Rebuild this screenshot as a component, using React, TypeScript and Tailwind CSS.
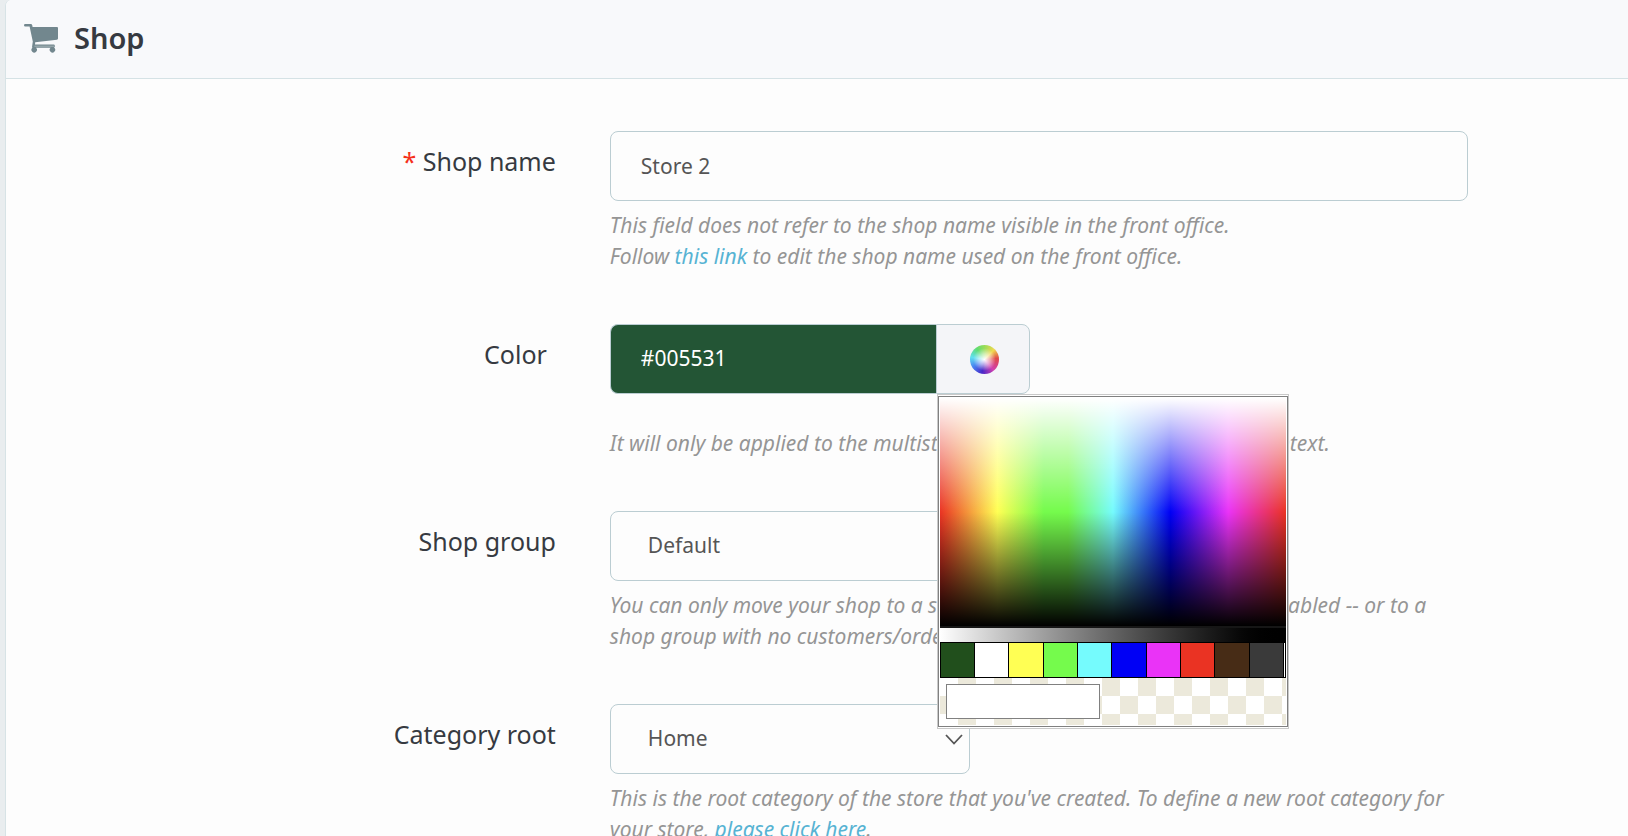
import type { ReactNode } from "react";
import { useState } from "react";

const SWATCHES = [
  { name: "Dark green", cls: "bg-[#214f1c]" },
  { name: "White", cls: "bg-white" },
  { name: "Yellow", cls: "bg-[#ffff54]" },
  { name: "Green", cls: "bg-[#75fb4c]" },
  { name: "Cyan", cls: "bg-[#75fbfd]" },
  { name: "Blue", cls: "bg-[#0000f5]" },
  { name: "Magenta", cls: "bg-[#ea33f7]" },
  { name: "Red", cls: "bg-[#ea3323]" },
  { name: "Brown", cls: "bg-[#472c16]" },
  { name: "Charcoal", cls: "bg-[#3a3a3a]" },
];

function CartIcon() {
  return (
    <svg viewBox="0 0 34 30" className="h-[30px] w-[34px] fill-[#72878e]" aria-hidden="true">
      <path d="M1.2 0.9H6.8Q7.9 0.9 8.2 2.1L8.6 4H33Q34 4 34 5V15.6Q34 16.6 33 16.7L11.2 19.2L11 21.6H29.6Q30.8 21.6 30.8 22.6V23.6Q30.8 24.4 30 24.6A2.7 2.7 0 1 1 26.6 24.8H12A2.7 2.7 0 1 1 8.4 24.8Q8 24.4 8.1 23.6L8.8 18.6L5.6 3.5H1.2Q0 3.5 0 2.2Q0 0.9 1.2 0.9Z" />
      <path d="M10.4 23.2H30" stroke="#b9c5c9" strokeWidth="0.7" />
    </svg>
  );
}

function ColorWheel() {
  return (
    <span className="block size-[29px] rounded-full bg-[radial-gradient(circle,#ffffff_0%,#ffffff88_28%,#ffffff00_55%),conic-gradient(from_0deg,#98dc58,#f0d850_45deg,#e04848_85deg,#d040b0_140deg,#4828c8_190deg,#4880f0_235deg,#60e0f0_280deg,#60dc70_325deg,#98dc58)]" />
  );
}

function Row({ label, htmlFor, required, pad, children }: { label: string; htmlFor: string; required?: boolean; pad?: boolean; children: ReactNode }) {
  return (
    <div className="flex">
      <label
        htmlFor={htmlFor}
        className={
          "w-[33.9%] shrink-0 pt-[13px] text-right text-[25px] leading-[34px] text-[#363a41] " + (pad ? "pr-[9px]" : "")
        }
      >
        {required && <span className="text-[#f53019]">* </span>}
        {label}
      </label>
      <div className="ml-[54px] w-[858px]">{children}</div>
    </div>
  );
}

function Help({ children }: { children: ReactNode }) {
  return <p className="pt-[9px] text-[21px] leading-[31px] text-[#959595] italic">{children}</p>;
}

function Picker() {
  return (
    <div className="absolute top-[70px] left-[327px] z-10 border border-[#c9c9c9] bg-white py-px">
      <div className="w-[350px] border border-[#808080] p-px">
        <div className="h-[230px] border-b-2 border-[#161616] bg-[linear-gradient(to_bottom,#ffffff,#ffffff00_50%,#00000000_50%,#000000),linear-gradient(to_right,#ea3323,#ffff54_16.6%,#75fb4c_30%,#75fb4c_37%,#75fbfd_50%,#0000f5_66.6%,#ea33f7_83.3%,#ea3323)]" />
        <div className="h-[14px] bg-linear-to-r from-white to-black" />
        <div className="flex h-9 border border-black bg-black">
          <div className="grid flex-1 grid-cols-10 gap-px">
            {SWATCHES.map((s) => (
              <button key={s.name} type="button" aria-label={s.name} className={s.cls} />
            ))}
          </div>
          <span className="ml-px w-px bg-white" />
        </div>
        <div className="h-[47px] bg-[repeating-conic-gradient(#ece9db_0_25%,#ffffff_0_50%)] bg-size-[36px_36px] px-[6px] pt-[6px]">
          <input aria-label="Picked color" className="block h-[35px] w-[154px] border border-[#808080] bg-white px-2 outline-none" />
        </div>
      </div>
    </div>
  );
}

const linkCls = "text-[#57b3d3]";
const selectCls =
  "block h-[70px] w-[360px] appearance-none rounded-lg border border-[#bbcdd2] bg-[#fdfdfd] pr-10 pl-[37px] text-[21px] text-[#555555] outline-none";

function Chevron() {
  return (
    <svg viewBox="0 0 18 11" className="pointer-events-none absolute top-[30px] right-[7px] h-[11px] w-[18px]" fill="none" stroke="#555" strokeWidth="1.8" aria-hidden="true">
      <path d="M1 1L9 9.5L17 1" />
    </svg>
  );
}

export default function App() {
  const [name, setName] = useState("Store 2");
  const [color, setColor] = useState("#005531");
  return (
    <div className="h-screen overflow-hidden bg-[#e9edef] pl-[5px] font-['Noto_Sans','Open_Sans',sans-serif]">
      <section className="min-h-full rounded-tl-md border-l border-[#d7e3e6] bg-[#fdfdfd]">
        <header className="flex h-[79px] items-center gap-4 rounded-tl-md border-b border-[#d5e2e5] bg-[#f8f9fb] pb-[2px] pl-[18px]">
          <CartIcon />
          <h1 className="text-[29px] leading-[38px] font-semibold text-[#363a41]">Shop</h1>
        </header>
        <form className="flex flex-col gap-[52px] pt-[52px]">
          <Row label="Shop name" htmlFor="name" required>
            <input
              id="name"
              value={name}
              onChange={(e) => setName(e.target.value)}
              className="block h-[70px] w-full rounded-lg border border-[#bbcdd2] bg-[#fdfdfd] px-[30px] text-[21px] text-[#555555] outline-none"
            />
            <Help>
              This field does not refer to the shop name visible in the front office.
              <br />
              Follow <a href="#front" className={linkCls}>this link</a> to edit the shop name used on the front office.
            </Help>
          </Row>
          <Row label="Color" htmlFor="color" pad>
            <div className="relative flex h-[70px] w-[420px]">
              <input
                id="color"
                value={color}
                onChange={(e) => setColor(e.target.value)}
                className="w-[326px] rounded-l-lg border border-r-0 border-[#bbcdd2] bg-[#235535] px-[30px] text-[21px] text-white outline-none"
              />
              <button type="button" aria-label="Open color picker" className="flex flex-1 items-center justify-center rounded-r-lg border border-[#bbcdd2] bg-[#f4f5f8] pl-1">
                <ColorWheel />
              </button>
              <Picker />
            </div>
            <div className="pt-[25px]">
              <Help>It will only be applied to the multistore header to highlight your shop context.</Help>
            </div>
          </Row>
          <Row label="Shop group" htmlFor="group">
            <div className="relative w-[360px]">
              <select id="group" className={selectCls}>
                <option>Default</option>
              </select>
              <Chevron />
            </div>
            <Help>
              You can only move your shop to a shop group with all "share" options disabled -- or to a shop group with no customers/orders.
            </Help>
          </Row>
          <Row label="Category root" htmlFor="category">
            <div className="relative w-[360px]">
              <select id="category" className={selectCls}>
                <option>Home</option>
              </select>
              <Chevron />
            </div>
            <Help>
              This is the root category of the store that you've created. To define a new root category for your store, <a href="#category" className={linkCls + " underline"}>please click here</a>.
            </Help>
          </Row>
        </form>
      </section>
    </div>
  );
}
